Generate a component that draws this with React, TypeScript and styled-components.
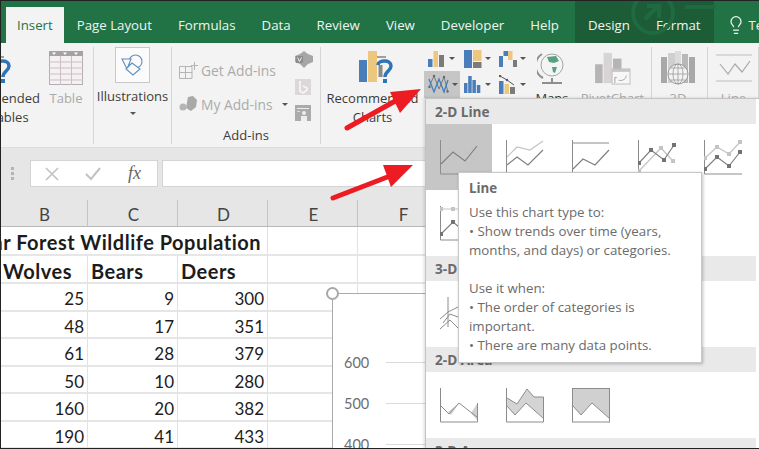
import React from "react";
import styled, {createGlobalStyle} from "styled-components";
import {Lightbulb} from "lucide-react";

const GlobalStyle = createGlobalStyle`
    html, body {
        margin: 0;
        padding: 0;
        background: #fff;
    }
`;

const uiFont = `"Open Sans", "Noto Sans", sans-serif`;
const cellFont = `Lato, "Liberation Sans", sans-serif`;

const Root = styled.div`
    position: relative;
    width: 759px;
    height: 449px;
    overflow: hidden;
    background: #fff;
    font-family: ${uiFont};

    &::after {
        content: "";
        position: absolute;
        inset: 0;
        border: 1px solid #222;
        border-right: none;
        pointer-events: none;
        z-index: 9;
    }
`;

/* tabs */
const TabBar = styled.div`
    position: relative;
    display: flex;
    align-items: flex-end;
    height: 43px;
    padding-left: 6px;
    background: #217346;
    overflow: hidden;
`;

const Tab = styled.div<{ $active?: boolean }>`
    position: relative;
    z-index: 1;
    display: flex;
    align-items: center;
    justify-content: center;
    flex-shrink: 0;
    height: 36px;
    padding: 0 ${p => (p.$active ? 11 : 13)}px;
    font-size: 13.25px;
    white-space: nowrap;
    color: ${p => (p.$active ? "#217346" : "#f0f4f1")};
    background: ${p => (p.$active ? "#f3f3f3" : "transparent")};
`;

const ContextTabs = styled.div`
    display: flex;
    flex-shrink: 0;
    height: 43px;
    align-items: flex-end;
    margin-left: 3px;
    background: #1c5d38;
`;

const Watermark = styled.svg`
    position: absolute;
    left: 625px;
    top: -7px;
    z-index: 1;
`;

const TellTab = styled(Tab)`
    gap: 3px;
    padding-left: 12px;
`;

/* ribbon */
const Ribbon = styled.div`
    display: flex;
    height: 105px;
    background: #f3f3f3;
    box-shadow: inset 0 -1px 0 #dcdcdc;
    overflow: hidden;
`;

const Group = styled.div<{ $width: number }>`
    display: flex;
    flex-shrink: 0;
    width: ${p => p.$width}px;
    height: 97px;
    box-sizing: border-box;
    border-right: 1px solid #d6d6d6;
    margin-top: 4px;
`;

const BigButton = styled.div<{ $width: number; $shift?: number }>`
    display: flex;
    flex-direction: column;
    align-items: center;
    flex-shrink: 0;
    width: ${p => p.$width}px;
    margin-left: ${p => p.$shift ?? 0}px;
    padding-top: 4px;
`;

const IconSlot = styled.div<{ $nudge?: number }>`
    display: flex;
    align-items: center;
    justify-content: center;
    height: 34px;
    margin-left: ${p => p.$nudge ?? 0}px;
`;

const RibbonLabel = styled.div<{ $muted?: boolean }>`
    margin-top: 4px;
    font-size: 13px;
    line-height: 19px;
    text-align: center;
    white-space: nowrap;
    color: ${p => (p.$muted ? "#aaaaaa" : "#3c3c3c")};
`;

const Caret = styled.span<{ $gap?: number; $indent?: number }>`
    display: inline-block;
    flex-shrink: 0;
    width: 0;
    height: 0;
    margin-top: ${p => p.$gap ?? 0}px;
    margin-left: ${p => p.$indent ?? 0}px;
    border-left: 3.5px solid transparent;
    border-right: 3.5px solid transparent;
    border-top: 3.5px solid #555;
`;

const ShapeBox = styled.div`
    display: flex;
    align-items: center;
    justify-content: center;
    width: 35px;
    height: 36px;
    margin: -4px 1px 0 0;
    background: #fbfbfb;
    border: 1px solid #c8c8c8;
    box-sizing: border-box;
`;

const AddinsBody = styled.div`
    display: flex;
    flex-direction: column;
    width: 100%;
`;

const AddinsTop = styled.div`
    display: flex;
    justify-content: space-between;
    height: 83px;
    box-sizing: border-box;
    padding: 4px 7px 0 7px;
`;

const AddinsRows = styled.div`
    display: flex;
    flex-direction: column;
    padding-top: 2px;
`;

const AddinRow = styled.div`
    display: flex;
    align-items: center;
    gap: 3px;
    height: 34px;
    font-size: 13.8px;
    color: #ababab;
    white-space: nowrap;
`;

const SideIcons = styled.div`
    display: flex;
    flex-direction: column;
    gap: 10px;
`;

const GroupLabel = styled.div`
    font-size: 13px;
    line-height: 18px;
    text-align: center;
    color: #3c3c3c;
`;

const MiniGrid = styled.div`
    display: grid;
    grid-template-columns: 36px 35px 35px;
    grid-template-rows: 25px 27px;
    flex-shrink: 0;
    margin-top: -1px;
`;

const MiniButton = styled.div<{ $active?: boolean }>`
    display: flex;
    align-items: center;
    gap: 3px;
    padding-left: 4px;
    background: ${p => (p.$active ? "#c6c6c6" : "transparent")};
`;

/* formula bar */
const FormulaBar = styled.div`
    display: flex;
    align-items: center;
    height: 52px;
    box-sizing: border-box;
    padding: 0 0 1px 11px;
    background: #e6e6e6;
`;

const Grip = styled.div`
    display: flex;
    flex-direction: column;
    gap: 2px;
    width: 19px;

    span {
        width: 3px;
        height: 3px;
        background: #b4b4b4;
    }
`;

const FormulaButtons = styled.div`
    display: flex;
    align-items: center;
    gap: 26px;
    width: 128px;
    height: 27px;
    box-sizing: border-box;
    padding-left: 14px;
    background: #fff;
    border: 1px solid #d4d4d4;
`;

const FxLabel = styled.span`
    font-family: "Liberation Serif", serif;
    font-style: italic;
    font-size: 18px;
    color: #666;
    margin-left: 1px;
`;

const FormulaInput = styled.div`
    flex: 1;
    height: 27px;
    margin-left: 4px;
    background: #fff;
    border: 1px solid #d4d4d4;
    box-sizing: border-box;
`;

/* sheet */
const ColumnHeader = styled.div`
    display: grid;
    grid-template-columns: 88px repeat(4, 90px) 1fr;
    height: 27px;
    background: #e6e6e6;
    border-bottom: 1px solid #b8b8b8;
    box-sizing: border-box;
`;

const ColumnName = styled.div`
    display: flex;
    align-items: center;
    justify-content: center;
    padding: 2px 0 0 2px;
    font-family: ${cellFont};
    font-size: 17px;
    color: #444;
    border-right: 1px solid #c4c4c4;
    box-sizing: border-box;
`;

const Sheet = styled.div`
    display: grid;
    grid-template-columns: 88px repeat(4, 90px) 1fr;
    grid-template-rows: 29px 28px 28px 27px 28px 27px 28px 27px;
`;

const Cell = styled.div<{ $bold?: boolean; $right?: boolean; $span?: number }>`
    display: flex;
    align-items: center;
    justify-content: ${p => (p.$right ? "flex-end" : "flex-start")};
    grid-column: span ${p => p.$span ?? 1};
    min-width: 0;
    overflow: hidden;
    box-sizing: border-box;
    padding: 3px 3px 0 3px;
    font-family: ${cellFont};
    font-size: ${p => (p.$bold ? 20 : 17)}px;
    font-weight: ${p => (p.$bold ? 700 : 400)};
    letter-spacing: ${p => (p.$bold ? 0.5 : 0)}px;
    white-space: nowrap;
    color: #1c1c1c;
    border-right: 1px solid #e2e2e2;
    border-bottom: 2px solid #e6e6e6;
`;

const SheetTitle = styled.span`
    margin-right: 3px;
`;

const ChartBox = styled.div`
    position: absolute;
    left: 332px;
    top: 293px;
    width: 500px;
    height: 300px;
    box-sizing: border-box;
    padding-top: 48px;
    background: #fff;
    border: 1.5px solid #aaa;
`;

const ChartHandle = styled.span`
    position: absolute;
    left: -7px;
    top: -7px;
    width: 13px;
    height: 13px;
    box-sizing: border-box;
    background: #fff;
    border: 2px solid #a8a8a8;
    border-radius: 50%;
`;

const ChartTick = styled.div`
    display: flex;
    align-items: center;
    gap: 17px;
    height: 41px;
    padding-left: 11px;
    font-family: ${cellFont};
    font-size: 14.5px;
    color: #6e6e6e;

    &::after {
        content: "";
        flex: 1;
        height: 1px;
        background: #d9d9d9;
    }
`;

/* chart type menu */
const Menu = styled.div`
    position: absolute;
    left: 425px;
    top: 98px;
    right: 0;
    bottom: 0;
    background: #fff;
    border-left: 1px solid #c4c4c4;
    border-top: 1px solid #c4c4c4;
    box-shadow: -1px 0 3px rgba(0, 0, 0, 0.15);
    padding-right: 3px;
    z-index: 2;
`;

const MenuHeader = styled.div`
    display: flex;
    align-items: center;
    height: 25px;
    padding-left: 9px;
    font-size: 13.6px;
    font-weight: 700;
    color: #6a6a6a;
    background: #e9e9e9;
`;

const MenuRow = styled.div`
    display: flex;
`;

const MenuCell = styled.div<{ $active?: boolean }>`
    display: flex;
    align-items: center;
    justify-content: center;
    width: 66px;
    height: 66px;
    background: ${p => (p.$active ? "#c6c6c6" : "transparent")};
`;

const Tooltip = styled.div`
    position: absolute;
    left: 458px;
    top: 172px;
    width: 244px;
    height: 191px;
    box-sizing: border-box;
    padding: 6px 10px;
    background: #fff;
    border: 1px solid #c8c8c8;
    box-shadow: 1px 1px 3px rgba(0, 0, 0, 0.25);
    font-size: 13.3px;
    line-height: 19px;
    white-space: nowrap;
    color: #6b6b6b;
    z-index: 3;
`;

const TooltipTitle = styled.div`
    font-weight: 700;
    margin-bottom: 5px;
`;

const TooltipBlock = styled.div`
    margin-bottom: 19px;
`;

const ArrowLayer = styled.svg`
    position: absolute;
    inset: 0;
    z-index: 5;
    pointer-events: none;
`;

/* drawings */
const BLUE = "#4a7ebb";
const GOLD = "#edc77d";
const GREY = "#7b7b7b";
const DARK = "#7f7f7f";
const LIGHT = "#c4c4c4";

const Axes = () => <path d="M.5 0V34H38" fill="none" stroke="#8c8c8c"/>;

const Line = ({d, light}: { d: string; light?: boolean }) => (
    <path d={d} fill="none" stroke={light ? LIGHT : DARK} strokeWidth={1.2}/>
);

const Dots = ({at, light}: { at: number[][]; light?: boolean }) => (
    <>
        {at.map(([x, y]) => (
            <rect key={`${x}-${y}`} x={x - 2} y={y - 2} width={4} height={4} fill={light ? LIGHT : "#737373"}/>
        ))}
    </>
);

const ChartIcon = ({children}: { children: React.ReactNode }) => (
    <svg width="39" height="35" viewBox="0 0 39 35">{children}</svg>
);

const lineIcons = [
    <ChartIcon key="line"><Axes/><Line light d="M1 31L23 9L37 21"/><Line d="M1 24L13 12L25 21L37 6"/></ChartIcon>,
    <ChartIcon key="stacked"><Axes/><Line light d="M1 17L11 7L24 10L37 1"/><Line d="M1 25L11 17L22 25L37 10"/></ChartIcon>,
    <ChartIcon key="percent"><Axes/><path d="M0 3H37" stroke="#8c8c8c"/><Line d="M1 29L11 19L23 25L37 10"/></ChartIcon>,
    <ChartIcon key="markers">
        <Axes/><Line light d="M1 31L23 8L35 21"/><Line d="M1 23L13 10L26 20L36 5"/>
        <Dots light at={[[1, 31], [23, 8], [35, 21]]}/><Dots at={[[1, 23], [13, 10], [26, 20], [36, 5]]}/>
    </ChartIcon>,
    <ChartIcon key="stacked-markers">
        <Axes/><Line light d="M1 18L13 7L25 14L36 2"/><Line d="M1 29L13 17L25 26L36 12"/>
        <Dots light at={[[1, 18], [13, 7], [25, 14], [36, 2]]}/><Dots at={[[1, 29], [13, 17], [25, 26], [36, 12]]}/>
    </ChartIcon>,
];

const PercentMarkersIcon = () => (
    <ChartIcon>
        <Axes/><path d="M1 3H37" stroke={LIGHT}/><Line d="M1 28L13 16L25 26"/>
        <Dots light at={[[1, 3], [13, 3]]}/><Dots at={[[1, 28], [13, 16]]}/>
    </ChartIcon>
);

const ThreeDIcon = () => (
    <ChartIcon>
        <path d="M8 0V30M0 22L8 15L18 10M0 32L10 23L18 31M3 26L10 17L18 20" fill="none" stroke="#8c8c8c"/>
    </ChartIcon>
);

const areaIcons = [
    <ChartIcon key="area">
        <path d="M8 24L19 15L11 27ZM31 25L37 16V32Z" fill="#d0d0d0"/>
        <path d="M.5 0V34H37.500V15" fill="none" stroke="#8c8c8c"/>
        <path d="M1 18L9 26L19 15L37 29" fill="none" stroke="#8c8c8c"/>
    </ChartIcon>,
    <ChartIcon key="stacked-area">
        <path d="M1 10L11 16L21 1L28 9H37.5V30L20 15L9 27L1 18Z" fill="#d4d4d4"/>
        <path d="M.5 0V34H37.5V9H28L21 1L11 16L1 10" fill="none" stroke="#8c8c8c"/>
        <path d="M1 18L9 27L20 15L37 30" fill="none" stroke="#8c8c8c"/>
    </ChartIcon>,
    <ChartIcon key="percent-area">
        <path d="M1 1H37V30L20 15L9 27L1 18Z" fill="#d0d0d0"/>
        <rect x=".5" y=".5" width="37" height="33.5" fill="none" stroke="#8c8c8c"/>
        <path d="M1 18L9 27L20 15L37 30" fill="none" stroke="#8c8c8c"/>
    </ChartIcon>,
];

const QuestionChart = ({clipped}: { clipped?: boolean }) => (
    <svg width="34" height="34" viewBox="0 0 34 34">
        {!clipped && <rect x="0" y="9" width="8" height="22" fill={BLUE}/>}
        {!clipped && <rect x="9" y="0" width="9" height="31" fill={GOLD}/>}
        <rect x="18" y="5" width="9" height="2" fill="#a0a0a0"/>
        <path d="M19 14C19 9 32 8 32 15C32 20 26 20 26 26" fill="none" stroke="#2e75b6" strokeWidth="3.5"/>
        <rect x="19.5" y="14" width="4" height="12" fill="#8a8a8a"/>
        <rect x="24" y="28" width="4" height="4" fill="#2e75b6"/>
    </svg>
);

const TableIcon = () => (
    <svg width="34" height="34" viewBox="0 0 34 34">
        <rect x=".5" y=".5" width="33" height="33" fill="#f5f0f2" stroke="#b5adb2"/>
        <rect x="0" y="0" width="34" height="5" fill="#a8a0a5"/>
        <path d="M3 1.5L7 1.5L5 4ZM14 1.5L18 1.5L16 4ZM25 1.5L29 1.5L27 4Z" fill="#fff"/>
        <path d="M0 11H34M0 17H34M0 23H34M0 29H34M11.5 5V34M22.5 5V34" stroke="#c9bfc5"/>
    </svg>
);

const ShapesIcon = () => (
    <svg width="22" height="22" viewBox="0 0 22 22" fill="none" stroke="#5f8fbf" strokeWidth="1.1">
        <circle cx="14.5" cy="7.5" r="6.5"/>
        <path d="M1 5H10L6 15Z" fill="#fbfbfb"/>
        <path d="M11 9L19 15L12 21L5 15Z" fill="#fbfbfb" stroke="#5f8fbf"/>
    </svg>
);

const GetAddinsIcon = () => (
    <svg width="19" height="17" viewBox="0 0 19 17" fill="none" stroke="#b4b4b4">
        <path d="M.5 4.500H13V16.500H.5ZM.5 10.500H13M6.500 4.500V16.500M15.500 0V8M12 3.500H19"/>
    </svg>
);

const MyAddinsIcon = () => (
    <svg width="19" height="16" viewBox="0 0 19 16">
        <path d="M9 1L14 0L18 4L17 11L12 15L7 12Z" fill="#a9a9a9"/>
        <circle cx="4" cy="11" r="3.500" fill="#b5b5b5"/>
    </svg>
);

const VisioIcon = () => (
    <svg width="18" height="18" viewBox="0 0 18 18">
        <path d="M5 3L9 0L13 3L18 5V11L13 13L9 17L5 13L0 11V5Z" fill="#a6a6a6"/>
        <rect x="1" y="5" width="7" height="7" fill="#8c8c8c"/>
        <path d="M2.500 6.500L4.500 10.500L6.500 6.500" fill="none" stroke="#eee"/>
    </svg>
);

const BingIcon = () => (
    <svg width="16" height="16" viewBox="0 0 16 16">
        <rect width="16" height="16" fill="#dcd8da"/>
        <path d="M5 2V12L8 14L12 11V9L8 7" fill="none" stroke="#f5f5f5" strokeWidth="1.800"/>
    </svg>
);

const PeopleIcon = () => (
    <svg width="16" height="16" viewBox="0 0 16 16">
        <rect width="16" height="16" fill="#ababab"/>
        <rect x="2" y="3" width="12" height="1" fill="#eee"/>
        <circle cx="9" cy="8" r="2" fill="#eee"/>
        <rect x="6" y="11" width="6" height="5" fill="#eee"/>
        <rect x="2" y="6" width="3" height="1" fill="#ddd"/>
    </svg>
);

const ColumnChartIcon = () => (
    <svg width="18" height="18" viewBox="0 0 18 18">
        <rect x="0" y="9" width="4.500" height="8" fill={BLUE}/>
        <rect x="5.500" y="1" width="4.500" height="16" fill={GOLD}/>
        <rect x="11" y="5" width="5" height="12" fill={GREY}/>
    </svg>
);

const TreemapIcon = () => (
    <svg width="18" height="18" viewBox="0 0 18 18">
        <rect x="0" y="0" width="8" height="18" fill={BLUE}/>
        <rect x="9" y="0" width="8.500" height="11" fill={GOLD}/>
        <rect x="9" y="12" width="8.500" height="6" fill={GREY}/>
    </svg>
);

const WaterfallIcon = () => (
    <svg width="18" height="18" viewBox="0 0 18 18">
        <rect x="0" y="6" width="4" height="11" fill={BLUE}/>
        <rect x="4.500" y="1" width="4.500" height="5" fill={BLUE}/>
        <rect x="9" y="1" width="4.500" height="9" fill={GOLD}/>
        <rect x="14" y="10" width="4" height="7" fill={GREY}/>
    </svg>
);

const ComboLineIcon = () => (
    <svg width="21" height="21" viewBox="0 0 21 21" fill="none">
        <path d="M1 13L6 2L11 15L16 3L20 18" stroke="#7a7a7a"/>
        <path d="M1 5L6 18L11 5L16 18L20 6" stroke="#3f7fc1" strokeWidth="1.300"/>
        <g fill="#5e6a76">
            <circle cx="1.500" cy="13" r="1.200"/><circle cx="6" cy="2" r="1.200"/>
            <circle cx="16" cy="3" r="1.200"/><circle cx="19.500" cy="17.500" r="1.200"/>
        </g>
    </svg>
);

const HistogramIcon = () => (
    <svg width="18" height="18" viewBox="0 0 18 18" fill={BLUE}>
        <rect x="0" y="7" width="3.500" height="10"/>
        <rect x="4.200" y="0" width="3.500" height="17"/>
        <rect x="8.400" y="4" width="3.500" height="13"/>
        <rect x="12.800" y="9" width="3.500" height="8"/>
    </svg>
);

const ParetoIcon = () => (
    <svg width="18" height="19" viewBox="0 0 18 19">
        <rect x="0" y="6" width="4.500" height="13" fill={BLUE}/>
        <rect x="5.500" y="9" width="4.500" height="10" fill={GOLD}/>
        <rect x="11" y="12" width="5" height="7" fill={GREY}/>
        <path d="M1 1L8 5L15 10" fill="none" stroke="#555"/>
        <circle cx="1" cy="1" r="1.200" fill="#555"/><circle cx="8" cy="5" r="1.200" fill="#555"/>
    </svg>
);

const GlobeIcon = () => (
    <svg width="30" height="34" viewBox="0 0 30 34">
        <path d="M5 3A14 14 0 0 0 6 27" fill="none" stroke="#8e8e8e" strokeWidth="2"/>
        <circle cx="15" cy="14" r="11" fill="#f4f4f4" stroke="#a5a5a5"/>
        <path d="M10 6L19 5L22 10L17 12L12 11ZM15 16L20 16L18 22L16 21Z" fill="#58a083"/>
        <path d="M15 27V31M5 32H25" stroke="#8e8e8e" strokeWidth="2"/>
    </svg>
);

const PivotChartIcon = () => (
    <svg width="36" height="33" viewBox="0 0 38 35">
        <rect x="0" y="13" width="8" height="20" fill="#b5b5b5"/>
        <rect x="9" y="1" width="9" height="32" fill="#d8d4d6"/>
        <rect x="19" y="7" width="9" height="26" fill="#b5b5b5"/>
        <rect x="18" y="18" width="19" height="16" fill="#f7f7f7" stroke="#bdbdbd"/>
        <rect x="18" y="18" width="19" height="3" fill="#c4c4c4"/>
        <path d="M25 30C30 31 33 28 33 25M23 27H21V33" fill="none" stroke="#a0a0a0"/>
    </svg>
);

const MapIcon = () => (
    <svg width="34" height="34" viewBox="0 0 34 34">
        <rect x="0" y="6" width="6" height="26" fill="#a8a8a8"/>
        <rect x="7" y="2" width="7" height="30" fill="#cfcfcf"/>
        <rect x="14" y="0" width="6" height="32" fill="#dcdcdc"/>
        <rect x="21" y="3" width="6" height="29" fill="#b8b8b8"/>
        <rect x="28" y="6" width="6" height="26" fill="#a8a8a8"/>
        <circle cx="17" cy="23" r="10" fill="#f3f3f3" stroke="#999"/>
        <path d="M7 23H27M17 13V33M10 17H24M10 29H24" stroke="#999" fill="none" strokeWidth=".800"/>
        <ellipse cx="17" cy="23" rx="5" ry="10" fill="none" stroke="#999" strokeWidth=".800"/>
    </svg>
);

const SparkLineIcon = () => (
    <svg width="36" height="28" viewBox="0 0 36 28" fill="none" stroke="#bdbdbd">
        <path d="M0 1H36M0 27H36"/>
        <path d="M4 10L12 20L19 10L26 18L34 7" strokeWidth="1.200" stroke="#a8a8a8"/>
    </svg>
);

const CrossIcon = () => (
    <svg width="14" height="14" viewBox="0 0 14 14" stroke="#c2c2c2" strokeWidth="1.600">
        <path d="M1 1L13 13M13 1L1 13"/>
    </svg>
);

const CheckIcon = () => (
    <svg width="16" height="14" viewBox="0 0 16 14" fill="none" stroke="#c2c2c2" strokeWidth="2">
        <path d="M1 7L6 12L15 1"/>
    </svg>
);

const tabs = ["Page Layout", "Formulas", "Data", "Review", "View", "Developer", "Help"];
const columns = ["B", "C", "D", "E", "F", ""];
const rows = [
    [25, 9, 300],
    [48, 17, 351],
    [61, 28, 379],
    [50, 10, 280],
    [160, 20, 382],
    [190, 41, 433],
];
const ticks = [600, 500, 400];

export default function App() {
    return (
        <Root>
            <GlobalStyle/>
            <TabBar>
                <Tab $active>Insert</Tab>
                {tabs.map(t => <Tab key={t}>{t}</Tab>)}
                <ContextTabs>
                    <Tab>Design</Tab>
                    <Tab>Format</Tab>
                </ContextTabs>
                <TellTab><Lightbulb size={20} strokeWidth={1.5}/>Tell me</TellTab>
                <Watermark width="90" height="48" viewBox="0 0 90 48" fill="none" stroke="#1f6a40" strokeWidth="4">
                    <circle cx="28" cy="20" r="20"/>
                    <path d="M20 26L34 12M22 13H34V25"/>
                    <path d="M60 14H90"/>
                </Watermark>
            </TabBar>

            <Ribbon>
                <Group $width={94}>
                    <BigButton $width={84} $shift={-48}>
                        <QuestionChart clipped/>
                        <RibbonLabel>Recommended<br/>PivotTables</RibbonLabel>
                    </BigButton>
                    <BigButton $width={40} $shift={10}>
                        <TableIcon/>
                        <RibbonLabel $muted>Table</RibbonLabel>
                    </BigButton>
                </Group>
                <Group $width={78}>
                    <BigButton $width={77}>
                        <ShapeBox><ShapesIcon/></ShapeBox>
                        <RibbonLabel>Illustrations</RibbonLabel>
                        <Caret $gap={6}/>
                    </BigButton>
                </Group>
                <Group $width={149}>
                    <AddinsBody>
                        <AddinsTop>
                            <AddinsRows>
                                <AddinRow><GetAddinsIcon/>Get Add-ins</AddinRow>
                                <AddinRow><MyAddinsIcon/>My Add-ins<Caret $gap={1} $indent={7}/></AddinRow>
                            </AddinsRows>
                            <SideIcons>
                                <VisioIcon/>
                                <BingIcon/>
                                <PeopleIcon/>
                            </SideIcons>
                        </AddinsTop>
                        <GroupLabel>Add-ins</GroupLabel>
                    </AddinsBody>
                </Group>
                <Group $width={331}>
                    <BigButton $width={103}>
                        <IconSlot $nudge={6}><QuestionChart/></IconSlot>
                        <RibbonLabel>Recommended<br/>Charts</RibbonLabel>
                    </BigButton>
                    <MiniGrid>
                        <MiniButton><ColumnChartIcon/><Caret/></MiniButton>
                        <MiniButton><TreemapIcon/><Caret/></MiniButton>
                        <MiniButton><WaterfallIcon/><Caret/></MiniButton>
                        <MiniButton $active><ComboLineIcon/><Caret/></MiniButton>
                        <MiniButton><HistogramIcon/><Caret/></MiniButton>
                        <MiniButton><ParetoIcon/><Caret/></MiniButton>
                    </MiniGrid>
                    <BigButton $width={44}>
                        <IconSlot><GlobeIcon/></IconSlot>
                        <RibbonLabel>Maps</RibbonLabel>
                    </BigButton>
                    <BigButton $width={77}>
                        <IconSlot><PivotChartIcon/></IconSlot>
                        <RibbonLabel $muted>PivotChart</RibbonLabel>
                    </BigButton>
                </Group>
                <Group $width={56}>
                    <BigButton $width={52}>
                        <IconSlot><MapIcon/></IconSlot>
                        <RibbonLabel $muted>3D</RibbonLabel>
                    </BigButton>
                </Group>
                <Group $width={51}>
                    <BigButton $width={51}>
                        <IconSlot><SparkLineIcon/></IconSlot>
                        <RibbonLabel $muted>Line</RibbonLabel>
                    </BigButton>
                </Group>
            </Ribbon>

            <FormulaBar>
                <Grip><span/><span/><span/></Grip>
                <FormulaButtons>
                    <CrossIcon/>
                    <CheckIcon/>
                    <FxLabel>fx</FxLabel>
                </FormulaButtons>
                <FormulaInput/>
            </FormulaBar>

            <ColumnHeader>
                {columns.map(c => <ColumnName key={c || "rest"}>{c}</ColumnName>)}
            </ColumnHeader>

            <Sheet>
                <Cell $bold $right $span={3}><SheetTitle>Bear Forest Wildlife Population</SheetTitle></Cell>
                <Cell/><Cell/><Cell/>
                <Cell $bold>Wolves</Cell>
                <Cell $bold>Bears</Cell>
                <Cell $bold>Deers</Cell>
                <Cell/><Cell/><Cell/>
                {rows.map(row => (
                    <React.Fragment key={row.join("-")}>
                        {row.map((v, i) => <Cell key={i} $right>{v}</Cell>)}
                        <Cell/><Cell/><Cell/>
                    </React.Fragment>
                ))}
            </Sheet>

            <ChartBox>
                <ChartHandle/>
                {ticks.map(t => <ChartTick key={t}>{t}</ChartTick>)}
            </ChartBox>

            <Menu>
                <MenuHeader>2-D Line</MenuHeader>
                <MenuRow>
                    {lineIcons.map((icon, i) => <MenuCell key={i} $active={i === 0}>{icon}</MenuCell>)}
                </MenuRow>
                <MenuRow><MenuCell><PercentMarkersIcon/></MenuCell></MenuRow>
                <MenuHeader>3-D Line</MenuHeader>
                <MenuRow><MenuCell><ThreeDIcon/></MenuCell></MenuRow>
                <MenuHeader>2-D Area</MenuHeader>
                <MenuRow>
                    {areaIcons.map((icon, i) => <MenuCell key={i}>{icon}</MenuCell>)}
                </MenuRow>
                <MenuHeader>3-D Area</MenuHeader>
            </Menu>

            <Tooltip>
                <TooltipTitle>Line</TooltipTitle>
                <TooltipBlock>
                    Use this chart type to:<br/>
                    • Show trends over time (years,<br/>
                    months, and days) or categories.
                </TooltipBlock>
                <div>
                    Use it when:<br/>
                    • The order of categories is<br/>
                    important.<br/>
                    • There are many data points.
                </div>
            </Tooltip>

            <ArrowLayer width="759" height="449" viewBox="0 0 759 449">
                <path d="M347 128L397 100" stroke="#ed1c24" strokeWidth="5" strokeLinecap="round"/>
                <path d="M421 89L390 92L400 113Z" fill="#ed1c24"/>
                <path d="M333 198L390 176" stroke="#ed1c24" strokeWidth="5" strokeLinecap="round"/>
                <path d="M413 165L383 165L391 187Z" fill="#ed1c24"/>
            </ArrowLayer>
        </Root>
    );
}
